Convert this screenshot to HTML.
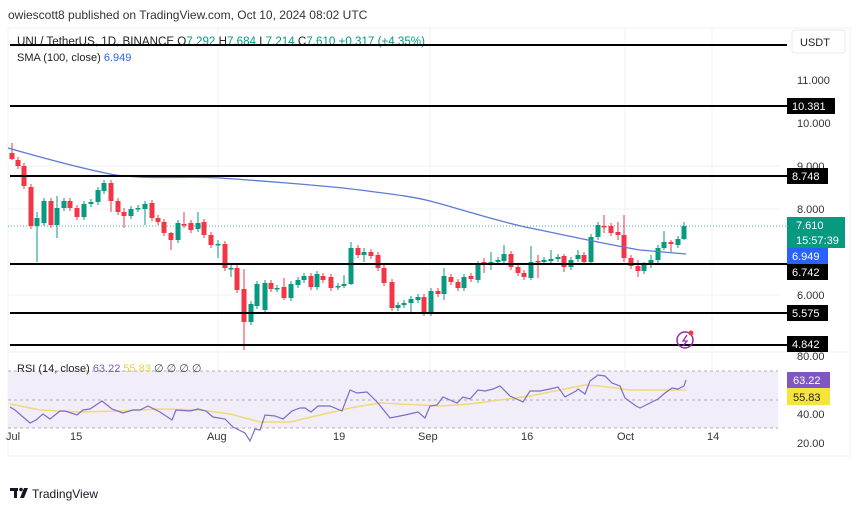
<!DOCTYPE html>
<html><head><meta charset="utf-8"><style>
html,body{margin:0;padding:0;background:#fff;width:860px;height:511px;overflow:hidden;font-family:"Liberation Sans",sans-serif}
</style></head><body>
<svg id="s" width="860" height="511" xmlns="http://www.w3.org/2000/svg" font-family="Liberation Sans, sans-serif">
<text x="8" y="19" font-size="12" fill="#333">owiescott8 published on TradingView.com, Oct 10, 2024 08:02 UTC</text>
<rect x="8" y="28" width="842" height="428" fill="none" stroke="#eef0f3"/>
<g stroke="#f0f2f5" stroke-width="1">
<line x1="218" y1="28" x2="218" y2="425"/><line x1="430" y1="28" x2="430" y2="425"/><line x1="625" y1="28" x2="625" y2="425"/><line x1="712" y1="28" x2="712" y2="425"/>
<line x1="8" y1="166" x2="780" y2="166"/><line x1="8" y1="209" x2="780" y2="209"/><line x1="8" y1="295" x2="780" y2="295"/>
<line x1="8" y1="352" x2="850" y2="352"/>
</g>
<text x="17" y="45" font-size="11.5" fill="#222" textLength="408" lengthAdjust="spacingAndGlyphs">UNI / TetherUS, 1D, BINANCE  O<tspan fill="#089981">7.292</tspan>  H<tspan fill="#089981">7.684</tspan>  L<tspan fill="#089981">7.214</tspan>  C<tspan fill="#089981">7.610  +0.317 (+4.35%)</tspan></text>
<text x="17" y="61" font-size="11" fill="#222">SMA (100, close)  <tspan fill="#2962ff">6.949</tspan></text>
<line x1="8" y1="226" x2="790" y2="226" stroke="#089981" stroke-dasharray="1,2" stroke-width="0.8"/>
<g id="c"></g>
<path fill="none" stroke="#5b7bd5" stroke-width="1.3" d="M8,148 C50,160 80,168 110,174 S190,176 220,178 S330,186 360,190 S410,196 430,201 S500,222 530,228 S600,243 640,250 L686,254"/>
<g stroke="#000" stroke-width="2">
<line x1="10" y1="45" x2="787" y2="45"/><line x1="10" y1="106" x2="787" y2="106"/><line x1="10" y1="176" x2="787" y2="176"/><line x1="10" y1="264" x2="787" y2="264"/><line x1="10" y1="313" x2="787" y2="313"/><line x1="10" y1="345" x2="787" y2="345"/>
</g>
<rect x="792" y="30" width="53" height="23" rx="3" fill="#fff" stroke="#e6e8ec"/>
<text x="800" y="46" font-size="11" fill="#222">USDT</text>
<g font-size="11" fill="#333">
<text x="797" y="84">11.000</text><text x="797" y="127">10.000</text><text x="797" y="170">9.000</text><text x="797" y="213">8.000</text><text x="797" y="299">6.000</text>
</g>
<g font-size="11" fill="#fff">
<rect x="787" y="98" width="48" height="16" fill="#000"/><text x="792" y="110">10.381</text>
<rect x="787" y="168" width="41" height="16" fill="#000"/><text x="792" y="180">8.748</text>
<rect x="787" y="217" width="58" height="31" fill="#089981"/><text x="796" y="229">7.610</text><text x="796" y="244">15:57:39</text>
<rect x="787" y="248" width="41" height="16" fill="#2962ff"/><text x="792" y="260">6.949</text>
<rect x="787" y="264" width="41" height="16" fill="#000"/><text x="792" y="276">6.742</text>
<rect x="787" y="305" width="41" height="16" fill="#000"/><text x="792" y="317">5.575</text>
<rect x="787" y="336" width="41" height="16" fill="#000"/><text x="792" y="348">4.842</text>
</g>
<circle cx="685" cy="340" r="8" fill="none" stroke="#9c27b0" stroke-width="1.5"/>
<path d="M687 335 L683 341 L687 341 L683 346" fill="none" stroke="#9c27b0" stroke-width="1.3"/>
<circle cx="691" cy="333" r="2.5" fill="#f23645"/>
<rect x="8" y="371" width="770" height="57" fill="#f1eefa"/>
<g stroke="#999" stroke-dasharray="3,3" stroke-width="0.8">
<line x1="8" y1="371" x2="778" y2="371"/><line x1="8" y1="400" x2="778" y2="400"/><line x1="8" y1="428" x2="778" y2="428"/>
</g>
<text x="17" y="372" font-size="11" fill="#222">RSI (14, close)  <tspan fill="#7e57c2">63.22</tspan>  <tspan fill="#e8d632">55.83</tspan>  <tspan fill="#444">∅  ∅  ∅  ∅</tspan></text>
<polyline fill="none" stroke="#f0d97a" stroke-width="1.5" points="10,404 40,410 80,412 120,411 160,409 200,410 230,414 260,422 290,422 320,415 350,408 380,403 400,404 440,406 470,404 500,400 530,396 560,390 585,385 600,386 630,390 660,390 686,390"/>
<polyline fill="none" stroke="#7e6bc4" stroke-width="1.2" points="10,407 15,410 30,423 36,420 43,414 50,419 60,411 65,411 77,415 83,410 90,409 102,401 112,409 123,413 133,410 140,410 148,406 160,412 172,420 176,410 190,411 198,409 206,411 213,417 225,419 233,427 245,433 250,441 255,429 260,430 265,415 275,416 283,419 292,411 300,408 305,408 311,412 318,406 330,406 342,411 350,390 357,393 367,392 378,403 390,418 405,415 418,412 425,418 430,406 437,405 443,397 450,400 457,403 463,397 470,399 478,390 485,391 493,389 500,386 510,396 523,402 530,391 540,391 550,389 558,387 565,397 576,391 578,389 585,394 590,381 598,375 605,376 612,383 620,386 625,398 636,406 640,408 650,403 658,399 665,393 672,388 678,389 684,386 686,380"/>
<g font-size="11">
<text x="797" y="360" fill="#333">80.00</text>
<rect x="787" y="372" width="43" height="16" fill="#7e57c2"/><text x="793" y="384" fill="#fff">63.22</text>
<rect x="787" y="388" width="43" height="17" fill="#f5e53b"/><text x="793" y="401" fill="#222">55.83</text>
<text x="797" y="418" fill="#333">40.00</text><text x="797" y="447" fill="#333">20.00</text>
</g>
<g font-size="11" fill="#333">
<text x="6" y="440">Jul</text><text x="70" y="440">15</text><text x="207" y="440">Aug</text><text x="333" y="440">19</text><text x="418" y="440">Sep</text><text x="521" y="440">16</text><text x="617" y="440">Oct</text><text x="707" y="440">14</text>
</g>
<g fill="#131722">
<rect x="10" y="488" width="8" height="3"/><rect x="14" y="488" width="3" height="10"/>
<circle cx="21" cy="489.5" r="1.8"/><path d="M24 488 L28 488 L24 498 L20 498 Z"/>
</g>
<text x="32" y="498" font-size="12" fill="#131722">TradingView</text>
</svg>
<script>
var d=[[12,153,159,'r',143,160],[18,160,166,'r'],[24,166,186,'r'],[31,187,226,'r'],[37,218,226,'g',212,262],[44,201,223,'g'],[51,201,225,'r'],[57,208,225,'g',196,238],[64,201,208,'g'],[70,201,208,'r'],[77,208,217,'r'],[84,204,217,'g'],[91,202,204,'g'],[98,190,202,'g'],[104,183,191,'g'],[111,183,201,'r',180,212],[118,201,212,'r'],[124,212,216,'r',208,228],[131,209,216,'g'],[138,208,209,'g'],[145,204,209,'g',201,225],[152,203,218,'r'],[158,218,222,'r'],[164,222,233,'r'],[171,233,240,'r',232,250],[178,223,240,'g'],[184,224,225,'r',212,228],[191,223,230,'r'],[198,223,229,'g',212,232],[204,222,235,'r'],[211,235,245,'r'],[218,244,245,'g',240,258],[225,244,268,'r'],[231,268,269,'g',265,277],[237,268,290,'r'],[244,289,322,'r',269,350],[251,304,322,'g'],[257,284,306,'g'],[265,283,310,'g'],[271,283,289,'r'],[277,288,289,'g'],[284,287,298,'r',278,300],[291,284,298,'g'],[298,280,285,'g'],[304,276,280,'g'],[311,276,287,'r'],[317,274,287,'g'],[323,276,280,'r'],[331,277,288,'r'],[338,286,287,'g'],[344,284,286,'g',275,288],[351,248,284,'g',242,285],[358,248,255,'r'],[364,252,255,'g',248,262],[371,252,256,'r'],[378,255,268,'r'],[384,268,283,'r'],[392,282,308,'r'],[398,305,308,'g'],[404,303,305,'g'],[411,299,303,'g',296,312],[418,297,300,'g'],[424,297,313,'r'],[431,291,313,'g'],[438,291,294,'r'],[444,276,294,'g',268,300],[451,277,282,'r'],[458,282,288,'r'],[464,277,288,'g'],[471,276,279,'r'],[478,264,280,'g'],[484,262,264,'r',258,273],[491,262,263,'g',252,270],[498,260,262,'g'],[504,254,261,'g',245,265],[511,254,267,'r'],[518,267,273,'r'],[524,273,277,'r'],[531,262,278,'g',246,280],[538,261,262,'r',255,278],[544,260,262,'g'],[551,259,261,'g',250,265],[558,257,259,'g'],[564,256,267,'r',254,272],[571,260,267,'g'],[578,255,259,'g',250,262],[584,255,262,'r'],[591,237,262,'g'],[598,225,237,'g',222,240],[604,226,227,'r',215,233],[611,226,233,'r'],[618,232,235,'r',222,240],[624,235,258,'r',215,262],[631,258,266,'r'],[638,266,271,'r',260,277],[644,265,271,'g'],[651,260,265,'g',255,268],[658,248,260,'g'],[664,242,248,'g',231,250],[671,242,244,'r',240,252],[678,239,245,'g'],[684,226,239,'g',222,240]];
var h='';d.forEach(function(c){var col=c[3]=='g'?'#089981':'#f23645';var hi=c[4]||c[1]-3,lo=c[5]||c[2]+3;
h+='<line x1="'+c[0]+'" x2="'+c[0]+'" y1="'+hi+'" y2="'+lo+'" stroke="'+col+'" stroke-width="1"/>';
h+='<rect x="'+(c[0]-2.5)+'" y="'+c[1]+'" width="5" height="'+Math.max(1.5,c[2]-c[1])+'" fill="'+col+'"/>';});
document.getElementById('c').innerHTML=h;
</script>
</body></html>
